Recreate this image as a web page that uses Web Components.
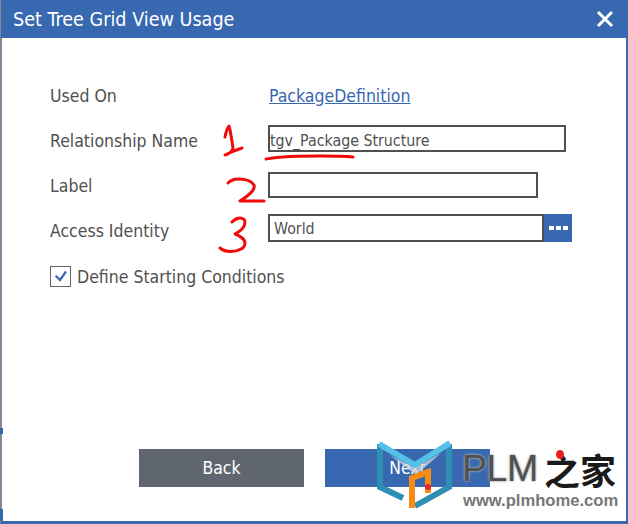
<!DOCTYPE html>
<html>
<head>
<meta charset="utf-8">
<style>
  html, body { margin: 0; height: 100%; background: #fff; }
  body { overflow: hidden; font-family: "DejaVu Sans Condensed", "DejaVu Sans", sans-serif; }
</style>
</head>
<body>
<usage-dialog heading="Set Tree Grid View Usage">
  <form-row label="Used On" gap="0" nudge="0">
    <a-link>PackageDefinition</a-link>
  </form-row>
  <form-row label="Relationship Name" gap="16" nudge="4">
    <text-box value="tgv_Package Structure" width="298" pad="0" nudge="3"></text-box>
  </form-row>
  <form-row label="Label" gap="20" height="26" nudge="2">
    <text-box width="270" height="26"></text-box>
  </form-row>
  <form-row label="Access Identity" gap="16" height="28" nudge="6">
    <text-box value="World" width="276" height="28" pad="4"></text-box><dots-button></dots-button>
  </form-row>
  <check-row slot="extra">Define Starting Conditions</check-row>
  <dialog-button slot="buttons" tone="#5f666f">Back</dialog-button>
  <dialog-button slot="buttons" tone="#3768b0">Next</dialog-button>
</usage-dialog>
<script>
class UsageDialog extends HTMLElement {
  shadowRoot = this.attachShadow({ mode: 'open' });
  connectedCallback() {
    this.shadowRoot.innerHTML = `
    <style>
      :host { display: flex; flex-direction: column; box-sizing: border-box; width: 628px; height: 524px;
        border-left: 2px solid #7d8796; border-right: 2px solid #3768b0; border-bottom: 3px solid #3768b0; color: #505050; position: relative; }
      header { height: 38px; flex-shrink: 0; background: #3768b0; color: #fff; display: flex; align-items: center;
        justify-content: space-between; padding: 0 14px 0 12px; font-size: 19.6px; margin: 0 -2px 0 -1px; }
      svg { display: block; }
      main { flex: 1; padding: 44px 0 0 48px; display: flex; flex-direction: column; }
      .extra { margin-top: 24px; }
      .buttons { display: flex; gap: 21px; padding: 0 0 34px 137px; }
      .edge { position: absolute; left: -2px; width: 3px; background: #3768b0; }
    </style>
    <header><span>${this.getAttribute('heading')}</span>
      <svg width="18" height="18" viewBox="0 0 18 18"><path d="M2 2 16 16M16 2 2 16" stroke="#fff" stroke-width="3" fill="none"/></svg>
    </header>
    <main>
      <div class="rows"><slot></slot></div>
      <div class="extra"><slot name="extra"></slot></div>
    </main>
    <div class="buttons"><slot name="buttons"></slot></div>
    <div class="edge" style="top:428px;height:6px"></div>
    <div class="edge" style="top:509px;height:12px"></div>
    <ink-marks></ink-marks>
    <plm-badge></plm-badge>`;
  }
}

class FormRow extends HTMLElement {
  shadowRoot = this.attachShadow({ mode: 'open' });
  connectedCallback() {
    const gap = this.getAttribute('gap') || 0;
    const h = this.getAttribute('height') || 27;
    this.shadowRoot.innerHTML = `
    <style>
      :host { display: flex; align-items: center; height: ${h}px; margin-top: ${gap}px; font-size: 17.5px; }
      .name { width: 218px; flex-shrink: 0; padding-top: ${this.getAttribute('nudge') || 0}px; }
      .field { display: flex; align-items: stretch; }
    </style>
    <span class="name">${this.getAttribute('label')}</span>
    <div class="field"><slot></slot></div>`;
  }
}

class ALink extends HTMLElement {
  shadowRoot = this.attachShadow({ mode: 'open' });
  connectedCallback() {
    this.shadowRoot.innerHTML = `
    <style>:host { display: block; color: #3768b0; text-decoration: underline; font-size: 17.5px; padding-left: 1px; }</style><slot></slot>`;
  }
}

class TextBox extends HTMLElement {
  shadowRoot = this.attachShadow({ mode: 'open' });
  connectedCallback() {
    const w = this.getAttribute('width');
    const h = this.getAttribute('height') || 27;
    const pad = this.getAttribute('pad') || 0;
    const nudge = this.getAttribute('nudge') || 0;
    this.shadowRoot.innerHTML = `
    <style>
      :host { display: flex; align-items: center; box-sizing: border-box; width: ${w}px; height: ${h}px;
        border: 2px solid #505050; padding: ${nudge}px 0 0 ${pad}px; font-size: 15.8px; background: #fff; }
    </style>${this.getAttribute('value') || ''}`;
  }
}

class DotsButton extends HTMLElement {
  shadowRoot = this.attachShadow({ mode: 'open' });
  connectedCallback() {
    this.shadowRoot.innerHTML = `
    <style>
      :host { display: flex; width: 28px; height: 28px; background: #3768b0; align-items: center; justify-content: center; gap: 2px; }
      i { width: 5px; height: 4px; background: #fff; }
    </style><i></i><i></i><i></i>`;
  }
}

class CheckRow extends HTMLElement {
  shadowRoot = this.attachShadow({ mode: 'open' });
  connectedCallback() {
    this.shadowRoot.innerHTML = `
    <style>
      :host { display: flex; align-items: center; gap: 6px; font-size: 17.5px; }
      .box { box-sizing: border-box; width: 21px; height: 21px; border: 1px solid #666; }
    </style>
    <div class="box"><svg width="19" height="19" viewBox="0 0 19 19" style="display:block"><path d="M4.7 8.7 9 13 15 4.5" stroke="#3768b0" stroke-width="2.2" fill="none"/></svg></div>
    <span><slot></slot></span>`;
  }
}

class DialogButton extends HTMLElement {
  shadowRoot = this.attachShadow({ mode: 'open' });
  connectedCallback() {
    this.shadowRoot.innerHTML = `
    <style>
      :host { display: flex; width: 165px; height: 38px; align-items: center; justify-content: center;
        background: ${this.getAttribute('tone')}; color: #fff; font-size: 17.4px; }
    </style><slot></slot>`;
  }
}

class InkMarks extends HTMLElement {
  shadowRoot = this.attachShadow({ mode: 'open' });
  connectedCallback() {
    this.shadowRoot.innerHTML = `
    <style>:host { position: absolute; left: -2px; top: 0; width: 628px; height: 524px; pointer-events: none; }</style>
    <svg width="628" height="524" fill="none" stroke="#f00a0a" stroke-width="3" stroke-linecap="round" stroke-linejoin="round">
      <path d="M225 137C226 132 227 128 229 126C231 133 232 142 233 148C232 152 229 154 225 155C231 152 236 150 242 148"/>
      <path d="M228 183C231 180 234 179 238 179C245 179 251 180 254 185C256 190 248 196 240 201C248 201 256 201 264 201"/>
      <path d="M232 222C235 219 238 218 240 218C243 218 245 220 245 222C245 227 241 231 235 234C240 236 244 239 245 242C245 246 244 248 241 249C236 252 226 253 220 248"/>
      <path d="M266 159C272 158 277 157 283 157C295 156 310 156 320 156C330 156 342 156 353 157"/>
    </svg>`;
  }
}

class PlmBadge extends HTMLElement {
  shadowRoot = this.attachShadow({ mode: 'open' });
  connectedCallback() {
    this.shadowRoot.innerHTML = `
    <style>
      /* sits at 375,440 on the 628 page, over the Next button */
      :host { position: absolute; left: 373px; top: 440px; width: 245px; height: 76px; font-family: "Liberation Sans", sans-serif; pointer-events: none; }
      svg { position: absolute; left: 0; top: 0; }
      .plm { position: absolute; left: 87px; top: 6px; font-size: 37.5px; line-height: 44px; color: #505050; letter-spacing: -0.4px; text-shadow: 0 0 2px #999, 0 0 3px #bbb; white-space: nowrap; }
      .cjk { position: absolute; left: 169px; top: 9px; font: 700 36px/40px "Noto Sans CJK SC", sans-serif; color: #1a1a1a; white-space: nowrap; }
      .dot { position: absolute; left: 181px; top: 10px; width: 8px; height: 9px; border-radius: 50%; background: #f01c1c; }
      .url { position: absolute; left: 88px; top: 52px; font-size: 16.6px; line-height: 18px; font-weight: 700; color: #777; white-space: nowrap; }
    </style>
    <svg width="80" height="76" viewBox="375 440 80 76" fill="none">
      <path d="M380 444V487L403 498" stroke="#2e8fb3" stroke-width="6"/>
      <path d="M449 444V487L415 506" stroke="#2e8fb3" stroke-width="6"/>
      <path d="M390 455 415 468 441 453 416 475Z" fill="#d5d8da" fill-opacity=".75"/>
      <path d="M379 444 415 465 450 443" stroke="#55c0e8" stroke-width="6"/>
      <path d="M412 508V478L428 472V493" stroke="#f78b13" stroke-width="6"/>
      <circle cx="428" cy="487" r="3" fill="#f01c2c"/>
    </svg>
    <span class="plm">PLM</span>
    <span class="cjk">之家</span>
    <div class="dot"></div>
    <span class="url">www.plmhome.com</span>`;
  }
}

customElements.define('usage-dialog', UsageDialog);
customElements.define('form-row', FormRow);
customElements.define('a-link', ALink);
customElements.define('text-box', TextBox);
customElements.define('dots-button', DotsButton);
customElements.define('check-row', CheckRow);
customElements.define('dialog-button', DialogButton);
customElements.define('ink-marks', InkMarks);
customElements.define('plm-badge', PlmBadge);
</script>
</body>
</html>
